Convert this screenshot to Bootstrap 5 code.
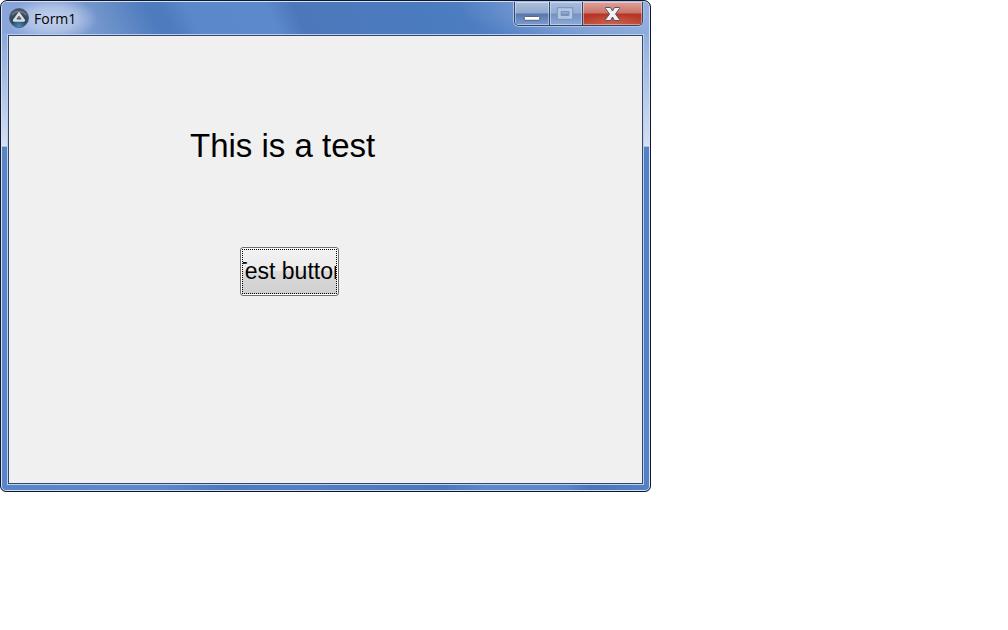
<!DOCTYPE html>
<html lang="en">
<head>
<meta charset="utf-8">
<meta name="viewport" content="width=device-width, initial-scale=1">
<title>Form1</title>
<link href="https://cdn.jsdelivr.net/npm/bootstrap@5.3.0/dist/css/bootstrap.min.css" rel="stylesheet">
<style>
body { background: #fff; color: #000; font-family: "Liberation Sans", Arial, sans-serif; }
.form-window {
  max-width: 651px;
  border: 1px solid #10162b;
  border-radius: 7px 7px 6px 6px;
  box-shadow: inset 0 0 0 1px #d3e2f6;
  padding: 1px 7px 7px;
  background:
    linear-gradient(#82a1d7 0, #8caadb 36px, #d3dff2 144px, #f0f4fa 145px, #5b80bc 146px, transparent 148px) left top / 8px 100% no-repeat,
    linear-gradient(#82a1d7 0, #93b0de 36px, #d3dff0 144px, #eef3fa 145px, #5b80bc 146px, transparent 148px) right top / 8px 100% no-repeat,
    linear-gradient(90deg, #5985c8 0, #5d89ca 24%, #4b7abd 35%, #5180c4 46%, #4b78b9 68%, #5c89c9 75%, #5b87c8 87%, #4976b8 91%, #5482c7 100%);
}
.title-bar {
  height: 32px;
  margin: 0 -6px;
  padding-left: 7px;
  border-radius: 5px 5px 0 0;
  background:
    radial-gradient(ellipse 46px 22px at 50px 17px, #c4d4ef 0, #bacbeac0 55%, transparent 100%),
    radial-gradient(ellipse 190px 55px at 100% 0, #94b0de 0, #94b0dec0 45%, transparent 100%),
    linear-gradient(65deg, #8ba6dc 0, #7e9cd2 12%, #6b91c9 17%, #4d7bbd 24%, #4d7bbd 26%, #5b88ca 30%, #5c89cb 42%, #4c78bb 46%, #4b7cc0 68%, #5582c5 80%, #88a8dc 100%);
}
.title-text { font: 14px/18px "Open Sans", "Noto Sans", sans-serif; padding-top: 8px; margin-left: 5px; }
.app-icon { margin-top: 6px; }
.caption-set { height: 24px; margin-right: 6px; border: 1px solid #334467; border-top: 0; border-radius: 0 0 5px 5px; box-shadow: 0 0 0 1px #a9c2e8; overflow: hidden; }
.caption-set button { border: 0; border-right: 1px solid #334467; border-radius: 0; padding: 0; display: flex; box-shadow: inset 0 0 0 1px #ffffff66; background: linear-gradient(#aebfdb 0, #91a8cd 11px, #5878ad 12px, #7a9cd2 100%); }
.caption-set .btn-min { width: 35px; }
.caption-set .btn-max { width: 33px; background: linear-gradient(#a7bbdc 0, #94aed6 11px, #7392c3 12px, #8dabd9 100%); }
.caption-set .btn-x { width: 59px; border-right: 0; background: radial-gradient(ellipse 32px 12px at 50% 100%, #d6704fa0, transparent), linear-gradient(#dda199 0, #cc7469 11px, #b43324 12px, #c04a3b 100%); }
.client-area {
  min-height: 449px;
  border: 1px solid #35466a;
  box-shadow: 0 0 0 1px #bdd0ec;
  background: #f0f0f0;
  margin-top: 1px;
  padding: 91px 16px 16px;
}
.test-label { font-size: 33px; line-height: 38px; padding-left: 165px; }
.test-button {
  width: 99px; height: 49px; margin: 82px 0 0 215px; padding: 1px;
  border: 1px solid #707070; border-radius: 3px;
  background: linear-gradient(#f2f2f2 0, #ebebeb 48%, #dadada 50%, #cfcfcf 100%);
  box-shadow: inset 0 0 0 1px #fafafa;
  color: #000; font-size: 23px; line-height: 26px;
}
.focus-box { height: 45px; border: 1px dotted #000; padding-bottom: 2px; }
</style>
</head>
<body>
<main class="form-window">
  <header class="title-bar d-flex align-items-start">
    <svg class="app-icon flex-shrink-0" width="20" height="20" viewBox="0 0 20 20" aria-hidden="true">
      <defs><radialGradient id="orb" cx=".5" cy=".95" r=".9"><stop offset="0" stop-color="#4c91b8"/><stop offset=".45" stop-color="#254761"/><stop offset="1" stop-color="#4c535e"/></radialGradient></defs>
      <circle cx="10" cy="10" r="9.5" fill="url(#orb)" stroke="#4b6380"/>
      <path d="M3 7a8 7 0 0 1 14 0" fill="none" stroke="#87909c" stroke-width="1.5" opacity=".7"/>
      <path d="M10 5.300 5 12.500h10Z" fill="#334355" stroke="#dcdfe2" stroke-width="2.300" stroke-linejoin="round"/>
      <path d="M10 8.200v2M8.500 11.300h3" stroke="#8c969f" stroke-width="1.300"/>
    </svg>
    <span class="title-text">Form1</span>
    <div class="caption-set d-flex ms-auto">
      <button type="button" class="btn-min" aria-label="Minimize"><svg width="35" height="23" viewBox="0 0 35 23"><rect x="9.500" y="14.500" width="16" height="4" rx="1" fill="#fff" stroke="#525c6c"/></svg></button>
      <button type="button" class="btn-max" aria-label="Maximize" disabled><svg width="33" height="23" viewBox="0 0 33 23"><path d="M7.500 5.500h16v12h-16ZM11.500 9.500h8v4h-8Z" fill="#b4c5e0" fill-rule="evenodd" stroke="#7790b7"/></svg></button>
      <button type="button" class="btn-x" aria-label="Close"><svg width="59" height="23" viewBox="0 0 59 23"><path d="M22.500 5.500h5l2 3.500 2-3.500h5v1l-4 5.500 4 5.500v1h-5l-2-3.500-2 3.500h-5v-1l4-5.500-4-5.500Z" fill="#f2f2f4" stroke="#535666" stroke-linejoin="round"/></svg></button>
    </div>
  </header>
  <section class="client-area">
    <div class="test-label text-nowrap">This is a test</div>
    <button type="button" class="test-button d-block">
      <span class="focus-box d-flex justify-content-center align-items-center overflow-hidden text-nowrap">Test button</span>
    </button>
  </section>
</main>
<script src="https://cdn.jsdelivr.net/npm/bootstrap@5.3.0/dist/js/bootstrap.bundle.min.js"></script>
</body>
</html>
